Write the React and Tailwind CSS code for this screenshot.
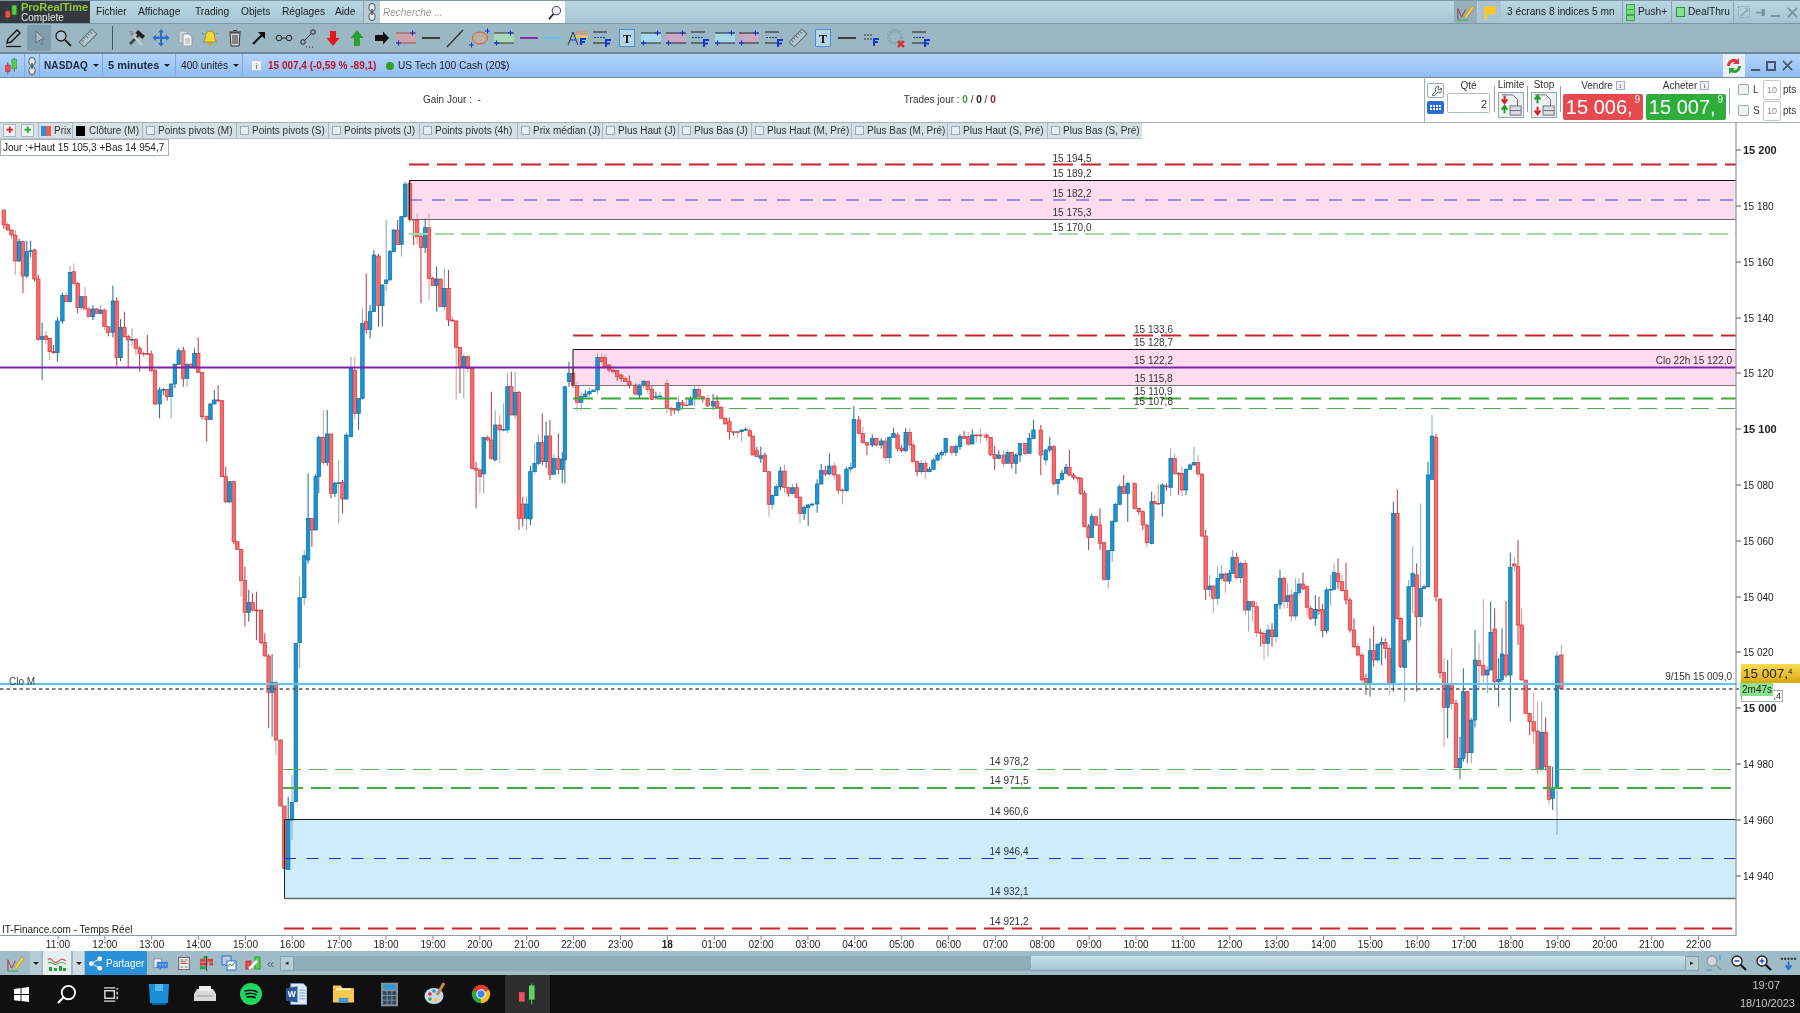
import React from "react";

/* ---------- chart data, traced in crop coordinates ---------- */
const A = [[10,240,284],[20,284,300],[30,300,315],[40,315,393,null,435],[50,393,335],[60,335,438,null,490],[70,438,365,332],[80,365,362,332],[90,360,447],[100,447,628],[110,628,620,578,750],[120,618,628],[130,625,665,null,690],[140,665,668],[150,668,573,null,695],[163,573,497],[173,497,515],[183,515,427,408],[193,425,460,400],[203,460,533],[212,533,500],[222,500,537,470],[232,537,560],[243,560,537,null,570],[253,537,550],[263,550,540,525],[273,540,590],[283,590,607],[295,607,513,467],[305,513,683,null,710],[315,683,592],[325,592,620,545],[335,620,630,null,715],[345,630,628,595],[355,628,655],[365,655,670,null,725],[375,670,670],[385,670,672,615],[395,672,722],[405,722,822],[417,822,780,null,865],[427,780,778],[437,778,800],[447,800,762,null,865],[457,762,703],[467,703,662,655],[479,662,745,650,770],[489,745,703,null,770],[499,703,712],[508,712,670,655],[518,670,727,622],[528,727,860],[540,860,868,null,935],[550,868,822],[560,822,810,780],[570,810,812,765],[580,812,1040],[590,1040,1116,1010],[600,1116,1055,null,1120],[611,1055,1235],[620,1235,1258],[630,1258,1352,null,1400],[640,1352,1447,1310,1490],[650,1447,1417,1380,1475],[660,1417,1440,1390],[670,1440,1440,1385,1530],[682,1440,1537],[692,1537,1578,1510],[702,1578,1687,null,1795],[711,1687,1658,1572,1820],[721,1658,1830,null,1875],[733,1830,2028],[743,2028,2215],[753,2218,2070,2000],[763,2070,2017,1935,2130],[773,2015,1540],[783,1538,1403,1340,1615],[795,1403,1277,1260,1425],[805,1290,1165,1030],[815,1165,1200,null,1250],[825,1200,1040],[833,1040,922,null,1090],[845,922,997,840],[855,997,912,840],[865,912,1090,null,1105],[875,1090,1060],[885,1060,1058,990,1180],[895,1057,1107,null,1150],[905,1107,915],[917,920,715,680],[927,720,850,680],[937,850,805,null,900],[947,805,580,535],[957,575,598,430],[967,598,545,null,625],[977,545,375,360],[989,378,527,372,590],[999,527,465,null,590],[1009,460,450,270],[1019,450,365],[1029,365,300],[1039,300,343,270],[1049,343,260,null,380],[1059,260,162,155],[1071,160,268],[1081,268,270,null,345],[1090,270,320,250],[1100,320,352,null,520],[1111,352,293,265],[1121,293,445,250,510],[1131,445,467],[1141,467,447,410,545],[1151,447,530],[1161,530,475,415,540],[1172,475,570,420],[1182,570,573],[1192,573,652,null,810],[1202,652,712,null,790],[1212,712,680,null,805],[1222,680,715,675],[1234,715,1015],[1244,1015,1020,null,1135],[1254,1020,1040,null,1090],[1264,1032,922,null,1090],[1274,922,930,915],[1284,930,985,785],[1294,990,885,840],[1306,885,900,855,1000],[1316,900,898,820],[1326,900,770,730],[1336,770,855,725],[1346,855,787,725],[1356,787,1165,null,1200],[1366,1122,1165,1100,1190],[1376,1165,1122,1100,1200],[1386,1167,1025],[1397,1025,1000,940],[1407,1000,937,915],[1417,937,995,850],[1427,995,918,875],[1437,918,1033,870,1050],[1447,1033,985],[1459,985,1018,910],[1469,1018,988,null,1060]];
const B = [[12,420,200,null,490],[22,185,160,125],[32,160,197],[42,197,247,null,275],[52,247,230,null,272],[62,230,222],[72,222,215],[82,215,210],[92,210,112,100],[102,112,125,100],[110,112,140,102],[120,135,150],[130,150,155],[140,152,170],[150,165,175],[160,175,185],[170,185,195],[185,195,222],[195,225,195],[205,195,183],[215,185,208],[225,208,238],[235,232,230],[245,230,228,215],[262,190,265,178,278],[272,265,265],[280,265,270,null,282],[290,270,248],[300,248,255],[310,255,255],[320,255,235],[330,235,208],[340,208,230,200],[350,230,235],[362,235,258,225],[375,258,245,222],[385,245,262],[395,262,295],[405,295,312],[415,305,335,292],[425,335,335],[435,335,335,null,352],[445,335,330,null,365],[455,330,328,322],[465,332,348],[472,348,405,null,390],[482,392,410,380],[492,415,407,380],[502,405,455,null,430],[512,455,553,null,590],[520,553,527],[530,527,500],[540,500,453,440],[550,453,503],[560,503,520,null,530],[570,520,503,492],[580,503,532],[588,532,580,null,610],[598,580,563,null,600],[608,563,555,null,618],[618,555,552],[630,552,492],[640,492,452,432],[650,452,462],[660,462,438,400],[672,438,465],[682,465,510],[692,510,512,null,553],[702,512,447],[712,447,442],[720,442,298,258],[732,300,340,288],[742,340,368],[752,368,375,null,405],[765,375,355],[775,355,375],[787,375,363],[797,363,413],[807,413,352,null,430],[817,352,340],[827,345,385],[837,385,392],[847,392,337,325],[857,337,375,325],[865,375,425],[875,425,455],[885,455,430],[895,430,455,null,478],[905,455,448],[915,448,420],[925,420,405],[935,405,397],[945,397,355],[960,380,397],[970,397,380],[980,380,350],[990,350,355],[1000,350,372,335],[1010,372,345,328],[1020,345,345],[1030,345,345,325],[1045,345,352],[1055,352,403],[1065,403,415,null,450],[1075,415,405],[1087,405,430],[1097,430,397],[1107,397,430],[1117,430,405,null,462],[1127,405,370],[1140,370,400],[1150,400,355],[1160,355,330,300],[1178,330,405,315,465],[1190,420,390,null,435],[1200,390,380,350],[1210,380,490],[1220,490,478,null,525],[1230,478,460],[1240,460,442],[1248,442,465,390],[1258,465,472],[1268,472,475],[1276,475,520],[1285,520,620],[1295,620,652,null,690],[1303,652,590],[1313,590,615],[1323,615,670,565,690],[1333,668,778],[1343,778,692,null,805],[1353,692,605,null,725],[1361,605,553],[1371,553,500],[1381,500,520,465],[1391,520,490,null,605],[1408,490,565],[1418,565,575],[1428,575,615,null,630],[1438,615,668,null,683]];
const C = [[5,430,305,275],[13,305,310,null,360],[25,310,310,250],[37,310,255,null,350],[49,258,260,250],[62,262,175,145,288],[74,175,220,160],[86,220,220,null,285],[96,220,270,null,288],[108,270,208],[120,208,195],[132,195,187,140],[144,187,222,165],[156,222,408],[167,408,568,390,600],[179,568,558,525,590],[190,558,595,null,640],[203,595,535,500,615],[214,535,522,495],[226,522,543,null,578],[238,543,520],[248,520,472,450],[260,472,533,458],[272,533,490,null,550],[286,490,630,480],[296,630,605,null,695],[308,605,620,null,665],[320,620,698],[332,698,700,null,740],[342,700,730,null,780],[354,730,690,null,770],[366,690,710,null,740],[378,710,613],[390,613,535,510],[402,535,605],[413,605,587,550],[424,585,648,null,665],[437,648,578,535,660],[447,578,552,535],[459,552,565,518],[471,560,622,null,645],[482,625,655],[496,655,628,585],[507,630,630,590],[518,628,692,null,712],[530,692,570,null,700],[542,570,568,525,615],[552,568,518,490],[564,520,545,475],[576,545,572],[588,572,600,488],[600,600,690],[612,690,740,655],[624,740,765],[636,765,840],[648,835,850,null,885],[660,850,752,715,890],[671,752,780,678,800],[683,780,733],[695,733,727,null,795],[706,727,745,715,775],[718,745,850,null,885],[730,850,340,305,875],[742,340,655,268],[752,655,800],[764,803,720,720,905],[776,720,560,540],[788,560,520,440,640],[800,525,650,490,875],[812,650,565,310,680],[822,565,560],[834,560,225,185],[846,238,108,45],[858,112,590,102,605],[870,597,818],[882,818,922,775,1040],[893,922,850,780,1015],[905,850,910,745],[918,910,1103],[930,1103,1075,1010,1138],[940,1075,875,805,1085],[952,875,1058,null,1090],[964,1058,960,null,1090],[975,960,780,690],[987,782,797,730,870],[1000,797,825,597],[1012,825,810,null,880],[1022,810,697,605],[1034,687,845,625,870],[1046,845,838,775,920],[1056,838,762,685],[1068,765,825,603],[1081,825,502,458,965],[1093,492,498,470],[1104,500,675,420,735],[1115,675,840,625],[1127,840,940,845],[1139,940,965,null,1005],[1151,965,993,878,1030],[1163,993,1108,905,1122],[1175,1108,997,905],[1187,997,1100,952],[1197,1100,1198,null,1215],[1208,1195,1165,1100,1230],[1221,1165,768,755,1305],[1234,765,865,735]];

const hash = (i) => { const s = Math.sin(i * 12.9898) * 43758.5453; return s - Math.floor(s); };
const toCandles = () => {
  const out = [];
  const add = (list, fx, y0) => list.forEach((t) => {
    const i = out.length;
    const a = y0 + t[1] / 3, b = y0 + t[2] / 3;
    const top = Math.min(a, b), bot = Math.max(a, b);
    const hi = t[3] != null ? y0 + t[3] / 3 : top - hash(i) * hash(i + 7) * 9;
    const lo = t[4] != null ? y0 + t[4] / 3 : bot + hash(i + 3) * hash(i + 11) * 9;
    out.push({ x: fx(t[0]), top, bot, hi, lo, up: b < a, faded: hash(i + 19) > 0.55 });
  });
  add(A, (X) => X / 2.613, 130);
  add(B, (X) => 560 + X / 2.45, 320);
  add(C, (X) => 1150 + X / 3, 400);
  return out;
};
const candles = toCandles();

const prices = [["15 200",150,1],["15 180",206],["15 160",262],["15 140",318],["15 120",373],["15 100",429,1],["15 080",485],["15 060",541],["15 040",597],["15 020",652],["15 000",708,1],["14 980",764],["14 960",820],["14 940",876]];
const hours = ["11:00","12:00","13:00","14:00","15:00","16:00","17:00","18:00","19:00","20:00","21:00","22:00","23:00","18","01:00","02:00","03:00","04:00","05:00","06:00","07:00","08:00","09:00","10:00","11:00","12:00","13:00","14:00","15:00","16:00","17:00","18:00","19:00","20:00","21:00","22:00"];
const levelText = [["15 194,5",1072,161.700],["15 189,2",1072,176.700],["15 182,2",1072,196.500],["15 175,3",1072,215.700],["15 170,0",1072,230.500],["15 133,6",1153.500,332.500],["15 128,7",1153.500,345.500],["15 122,2",1153.500,363.700],["15 115,8",1153.500,381.700],["15 110,9",1153.500,394.700],["15 107,8",1153.500,405],["14 978,2",1009,765],["14 971,5",1009,784],["14 960,6",1009,815],["14 946,4",1009,854.500],["14 932,1",1009,894.500],["14 921,2",1009,924.500]];

function Chart() {
  return (
    <svg viewBox="0 122 1800 829" className="block w-[1800px] h-[829px]">
      <rect x="409.5" y="180.5" width="1326.5" height="39" fill="#fddcf0" />
      <rect x="573" y="349.5" width="1163" height="36" fill="#fddcf0" />
      <rect x="284.5" y="819.5" width="1451.5" height="79" fill="#cdecfc" />
      {candles.map((c, i) => (
        <g key={i}>
          <line x1={c.x} x2={c.x} y1={c.hi} y2={c.lo} strokeWidth="1" stroke={c.up ? (c.faded ? "#7fa9bf" : "#1b6a98") : (c.faded ? "#d79a9a" : "#b6393c")} />
          <rect x={c.x - 1.75} y={c.top} width="3.5" height={Math.max(c.bot - c.top, 0.8)} fill={c.up ? "#1b94d2" : "#f86a6c"} stroke={c.up ? "#0f6ea4" : "#cf3a3f"} strokeWidth="0.7" />
        </g>
      ))}
      <path d="M409.5 219.5V180.5H1736" fill="none" stroke="#111" />
      <path d="M409.5 219.5H1736" fill="none" stroke="#666" />
      <path d="M573 385.5V349.5H1736" fill="none" stroke="#111" />
      <path d="M573 385.5H1736" fill="none" stroke="#777" />
      <path d="M284.5 898.5V819.5H1736" fill="none" stroke="#222" />
      <path d="M284.5 898.5H1736" fill="none" stroke="#666" strokeWidth="1.4" />

      <line x1="409" x2="1736" y1="164.5" y2="164.5" stroke="#c9242c" strokeWidth="2" strokeDasharray="20 8" />
      <line x1="409" x2="1736" y1="200" y2="200" stroke="#4440cc" strokeWidth="1.2" strokeDasharray="13 10" />
      <line x1="409" x2="1736" y1="234" y2="234" stroke="#a3d9a3" strokeWidth="2" strokeDasharray="19 7" />
      <line x1="573" x2="1736" y1="335.5" y2="335.5" stroke="#c9242c" strokeWidth="2" strokeDasharray="20 8" />
      <line x1="0" x2="1736" y1="367.5" y2="367.5" stroke="#7b22a8" strokeWidth="2" />
      <line x1="573" x2="1736" y1="398.5" y2="398.5" stroke="#38a838" strokeWidth="2" strokeDasharray="20 8" />
      <line x1="573" x2="1736" y1="408.5" y2="408.5" stroke="#4caf50" strokeWidth="1" strokeDasharray="18 8" />
      <line x1="0" x2="1736" y1="684" y2="684" stroke="#5cc6f4" strokeWidth="2" />
      <line x1="0" x2="1742" y1="689" y2="689" stroke="#555" strokeWidth="1.4" strokeDasharray="3.5 3" />
      <line x1="283" x2="1736" y1="769.5" y2="769.5" stroke="#53b553" strokeWidth="1" strokeDasharray="18 8" />
      <line x1="283" x2="1736" y1="788" y2="788" stroke="#43aa45" strokeWidth="2" strokeDasharray="20 8" />
      <line x1="284" x2="1736" y1="858.5" y2="858.5" stroke="#2a2ad0" strokeWidth="1.2" strokeDasharray="12 10.5" />
      <line x1="284" x2="1736" y1="928.5" y2="928.5" stroke="#c9242c" strokeWidth="2" strokeDasharray="20 8" />

      <g fontSize="10" fill="#333">
        {levelText.map(([t, x, y]) => <text key={t} x={x} y={y} textAnchor="middle">{t}</text>)}
        <text x="1732" y="363.5" textAnchor="end">Clo 22h 15 122,0</text>
        <text x="1732" y="679.5" textAnchor="end">9/15h 15 009,0</text>
        <text x="9" y="685" fill="#444">Clo M</text>
        <text x="2" y="932.5" fill="#222">IT-Finance.com - Temps Réel</text>
      </g>

      <path d="M0 935.5H1736V122" fill="none" stroke="#8d9ca6" strokeWidth="1.2" />
      {prices.map(([t, y, b]) => (
        <g key={t}>
          <line x1="1736" x2="1741" y1={y} y2={y} stroke="#555" />
          <text x="1743" y={y + 3.5} fontSize={b ? 11 : 10} fontWeight={b ? 700 : 400} fill="#222">{t}</text>
        </g>
      ))}
      {hours.map((t, i) => {
        const x = 58 + 46.87 * i;
        return (
          <g key={i}>
            <line x1={x} x2={x} y1="936" y2="940" stroke="#7f8f99" />
            <text x={x} y="948" fontSize="10" textAnchor="middle" fontWeight={t === "18" ? 700 : 400} fill="#222">{t}</text>
          </g>
        );
      })}
    </svg>
  );
}

/* ---------- icons ---------- */
const S = ({ children, c = "w-[20px] h-[20px]", v = "0 0 20 20" }) => <svg viewBox={v} className={c}>{children}</svg>;
const Pencil = () => <S><path d="M3 15l1-4L13 2l3 3-9 9z" fill="none" stroke="#111" strokeWidth="1.4" /><path d="M2 18.5h15" stroke="#111" strokeWidth="1.2" /></S>;
const Pointer = () => <S><path d="M7 3v12l3-3 2.5 5 1.6-.8-2.5-4.7 3.6-.5z" fill="#a9bcc6" stroke="#5b6a72" strokeWidth=".8" /></S>;
const Mag = () => <S><circle cx="8" cy="8" r="5" fill="#a9c5d1" stroke="#222" strokeWidth="1.3" /><path d="M12 12l6 6" stroke="#222" strokeWidth="1.8" /></S>;
const Ruler = () => <S><g transform="rotate(-45 10 10)"><rect x="1" y="6.5" width="18" height="7" fill="#b4c8d1" stroke="#5d6c74" /><path d="M4 7v3M7 7v2M10 7v3M13 7v2M16 7v3" stroke="#5d6c74" /></g></S>;
const Tools = () => <S><path d="M3 16L14 5" stroke="#444" strokeWidth="2.6" /><path d="M11 2l7 6-2.5 3-7-6z" fill="#222" /><path d="M15 17L5 6" stroke="#c8ced2" strokeWidth="2.6" /><path d="M2 3l4 0 1 4-3 1z" fill="#8a9499" /></S>;
const Move = () => <S><path d="M10 1l3 3.5h-2v4h4v-2L18.5 10 15 13v-2h-4v4h2L10 18.5 7 15h2v-4H5v2L1.5 10 5 6.5v2h4v-4H7z" fill="#2a6fc4" /></S>;
const Copy = () => <S><path d="M3 3h8v12H3z" fill="#c9d2d7" stroke="#9aa6ac" /><path d="M7 6h6l3 3v9H7z" fill="#f2f4f5" stroke="#8f9ba1" /><path d="M9 11h5M9 13h5M9 15h5" stroke="#9aa6ac" /></S>;
const Bell = () => <S><path d="M10 3c-3 0-4.5 2.5-4.5 5.5 0 3-1.5 4.5-2 5.5h13c-.5-1-2-2.500-2-5.500C14.500 5.500 13 3 10 3z" fill="#f5d530" stroke="#8f7a10" strokeWidth=".7" /><circle cx="10" cy="16" r="1.800" fill="#d9a800" /><path d="M2 5l1.500 1M18 5l-1.500 1" stroke="#666" /></S>;
const Trash = () => <S><path d="M5 5h10l-1 13H6z" fill="#d3d8d8" stroke="#333" /><path d="M4 4h12M8 2.500h4M8 7v9M10 7v9M12 7v9" stroke="#333" /></S>;
const ArrowNE = () => <S><path d="M4 16L14 6" stroke="#111" strokeWidth="2.2" /><path d="M9 4h7v7z" fill="#111" /></S>;
const LinkLine = () => <S><circle cx="5" cy="10" r="2.800" fill="none" stroke="#222" /><circle cx="15" cy="10" r="2.800" fill="none" stroke="#222" /><path d="M8 10h4" stroke="#222" /></S>;
const DotsLine = () => <S><circle cx="5" cy="14" r="2.300" fill="none" stroke="#222" /><circle cx="15" cy="4" r="2.300" fill="none" stroke="#222" /><path d="M7 12l6-6M8 19h1M11 19h1M14 19h1" stroke="#222" /></S>;
const DownRed = () => <S><path d="M7 3h6v7h3.500L10 18 3.500 10H7z" fill="#e3191c" /></S>;
const UpGreen = () => <S><path d="M7 18h6v-8h3.500L10 2 3.500 10H7z" fill="#2ca02c" /></S>;
const RightBlack = () => <S><path d="M3 7h8V3.500l6 6.500-6 6.500V13H3z" fill="#111" /></S>;
const RectPlus = ({ fill = "#c8a5ab", line = "#b04a4a" }) => <S v="0 0 22 20" c="w-[22px] h-[20px]"><rect x="1" y="5" width="20" height="10" fill={fill} /><path d="M1 5h20M1 15h20" stroke={line} /><path d="M1 15h5M3.500 12.500v5M15 5h5M17.500 2.500v5" stroke="#1238d0" strokeWidth="1.200" /></S>;
const Line = ({ col = "#333" }) => <S v="0 0 22 20" c="w-[22px] h-[20px]"><path d="M2 10h18" stroke={col} strokeWidth="1.800" /></S>;
const Diag = () => <S><path d="M2 19L18 2" stroke="#333" strokeWidth="1.400" /></S>;
const Ellipse = () => <S v="0 0 22 20" c="w-[22px] h-[20px]"><ellipse cx="11" cy="10" rx="7.500" ry="6" fill="#bfae9f" stroke="#c8632f" /><path d="M0 17h5M2.500 14.500v5M16 3h5M18.500 .5v5" stroke="#1238d0" /></S>;
const Fib = () => <S v="0 0 22 20" c="w-[22px] h-[20px]"><path d="M9 3h12v3H9z" fill="#c99" /><path d="M9 7h12v3H9z" fill="#ecc35a" /><path d="M1 17L6 4l5 13" fill="none" stroke="#333" /><path d="M3 12h6" stroke="#1238d0" /><path d="M14 17v-6h5M14 14h4" fill="none" stroke="#1238d0" strokeWidth="2" /></S>;
const LinesF = () => <S v="0 0 20 20" c="w-[20px] h-[20px]"><path d="M1 4h14M1 15h14" stroke="#222" strokeWidth="1.200" /><path d="M2 9.500h12" stroke="#1238d0" strokeDasharray="2 1" /><path d="M14 19v-7h5M14 15.500h4" fill="none" stroke="#1238d0" strokeWidth="2" /></S>;
const TBox = () => <S v="0 0 16 18" c="w-[16px] h-[18px]"><rect x=".5" y=".5" width="15" height="17" fill="#b9d4e6" stroke="#4d8fd8" /><text x="8" y="13.500" fontSize="12" fontWeight="700" textAnchor="middle" fill="#111" fontFamily="Liberation Serif, serif">T</text></S>;
const SmallF = () => <S><path d="M2 7h2M5 7h2M8 7h2M2 11h12" stroke="#333" strokeDasharray="2 1" /><path d="M12 18v-7h5M12 14h4" fill="none" stroke="#1238d0" strokeWidth="2" /></S>;
const CircleX = () => <S><circle cx="9" cy="9" r="6.500" fill="none" stroke="#8ea2ab" strokeWidth="3.500" strokeDasharray="2 1" /><path d="M12 13l6 6M18 13l-6 6" stroke="#e02a2a" strokeWidth="2.400" /></S>;
const LinkV = () => <S v="0 0 10 20" c="w-[10px] h-[20px]"><rect x="2" y="1.500" width="6" height="8" rx="3" fill="#dde6ea" stroke="#555" /><rect x="2" y="10.500" width="6" height="8" rx="3" fill="#dde6ea" stroke="#555" /><path d="M5 7v6" stroke="#555" strokeWidth="1.500" /></S>;
const CandleIcon = () => <S v="0 0 16 20" c="w-[15px] h-[20px]"><path d="M4 6v13M11 1v15" stroke="#555" /><rect x="1.500" y="9" width="5" height="7" fill="#ef4e50" stroke="#b03030" strokeWidth=".6" /><rect x="8.500" y="3" width="5" height="10" fill="#58d043" stroke="#2a9a2a" strokeWidth=".6" /></S>;
const Refresh = () => <S><path d="M3 10a7 7 0 0 1 10-6.300L15 2v6H9l2-2a4 4 0 0 0-5 4z" fill="#e8333a" /><path d="M17 10a7 7 0 0 1-10 6.300L5 18v-6h6l-2 2a4 4 0 0 0 5-4z" fill="#2da52d" /></S>;
const LimitBtn = ({ up }) => (
  <svg viewBox="0 0 26 26" className="w-[24px] h-[24px]">
    <path d="M3 2h12l5 5v8" fill="none" stroke="#667" />
    <path d={up ? "M6 3v7M3 7l3 4 3-4" : "M6 11V4M3 7l3-4 3 4"} stroke={up ? "#d92020" : "#1f9d1f"} strokeWidth="2.200" fill="none" />
    <path d={up ? "M6 22v-7M3 18l3-4 3 4" : "M6 15v7M3 19l3 4 3-4"} stroke={up ? "#1f9d1f" : "#d92020"} strokeWidth="2.200" fill="none" />
    <rect x="12" y="14" width="12" height="10" fill="#d9dfe2" stroke="#667" />
    <path d="M12 19h12" stroke="#667" />
  </svg>
);
const WinX = ({ col = "#46596a" }) => <S v="0 0 12 12" c="w-[11px] h-[11px]"><path d="M1 1l10 10M11 1L1 11" stroke={col} strokeWidth="1.800" /></S>;
const InfoBox = () => <span className="w-[9px] h-[9px] ml-[3px] border border-[#aab] bg-[#eef2f5] text-[7px] leading-[8px] text-center text-[#446] font-['Liberation_Serif',serif]">i</span>;
const Pen2 = () => <svg viewBox="0 0 20 20" className="w-[19px] h-[19px]"><path d="M2 18V6l4 9 4-8" fill="none" stroke="#a33" /><path d="M2 18h11" stroke="#3a3" /><path d="M9 14l8-11 2 2-8 11z" fill="#f4d03f" stroke="#a08010" strokeWidth=".5" /></svg>;

const toolIcons = [Pencil, Pointer, Mag, Ruler, null, Tools, Move, Copy, Bell, Trash, ArrowNE, LinkLine, DotsLine, DownRed, UpGreen, RightBlack, RectPlus,
  Line, Diag, Ellipse, () => <RectPlus fill="#a8d8b8" line="#333" />, () => <Line col="#7b22a8" />, () => <Line col="#5cc6f4" />, Fib, LinesF, TBox,
  () => <RectPlus fill="#a6d6ea" line="#222" />, () => <RectPlus fill="#c8a9c4" line="#222" />, LinesF, () => <RectPlus fill="#a6d6ea" line="#222" />, () => <RectPlus fill="#c8a9c4" line="#222" />, LinesF, Ruler, TBox, Line, SmallF, CircleX, LinesF];

const legend = [
  ["w-[94px]", "Points pivots (M)"], ["w-[92px]", "Points pivots (S)"], ["w-[91px]", "Points pivots (J)"], ["w-[98px]", "Points pivots (4h)"],
  ["w-[85px]", "Prix médian (J)"], ["w-[76px]", "Plus Haut (J)"], ["w-[73px]", "Plus Bas (J)"], ["w-[100px]", "Plus Haut (M, Pré)"],
  ["w-[96px]", "Plus Bas (M, Pré)"], ["w-[100px]", "Plus Haut (S, Pré)"], ["w-[95px]", "Plus Bas (S, Pré)"],
];
const Check = () => <span className="w-[9px] h-[9px] border border-[#98a8b0] bg-[#e8edf0] shrink-0" />;
const Sep = ({ c = "" }) => <span className={`w-px h-[26px] bg-[#8fa3ae] shrink-0 ${c}`} />;

const PriceBtn = ({ bg, main, sup }) => (
  <div className={`${bg} w-[80px] h-[26px] rounded-[2px] mt-[2px] flex items-start justify-center text-white text-[20px] leading-[27px] font-light`}>
    {main}<span className="text-[10px] leading-[12px] ml-[2px]">{sup}</span>
  </div>
);

const Tri = () => <span className="w-0 h-0 border-x-[3px] border-x-transparent border-t-[3px] border-t-[#222]" />;
const Caret = () => <span className="ml-[5px] flex"><Tri /></span>;

export default function App() {
  return (
    <div className="w-[1800px] h-[1013px] overflow-hidden flex flex-col bg-white text-[#222] font-['Liberation_Sans',Arial,sans-serif] text-[11px] blur-[0.3px]">
      {/* menu bar */}
      <div className="h-[24px] shrink-0 flex items-center bg-gradient-to-b from-[#b9d7e2] to-[#a5c5d2] border-y border-[#7c98a6] text-[10.2px]">
        <div className="w-[90px] h-full bg-[#333a3d] flex items-center pl-[4px] mr-[6px]">
          <CandleIcon />
          <div className="ml-[2px] leading-[11px]">
            <div className="text-[#8fc83f] font-bold text-[11px] leading-[12px]">ProRealTime</div>
            <div className="text-[#e8e8e8] text-[10px] leading-[10px]">Complete</div>
          </div>
        </div>
        <span className="w-[42px]">Fichier</span>
        <span className="w-[57px]">Affichage</span>
        <span className="w-[46px]">Trading</span>
        <span className="w-[41px]">Objets</span>
        <span className="w-[53px]">Réglages</span>
        <span className="w-[28px]">Aide</span>
        <span className="w-[17px] h-full flex items-center justify-center bg-[#b8cdd6] border-l border-[#8fa3ae]"><LinkV /></span>
        <div className="w-[185px] h-full bg-white flex items-center justify-between px-[3px] italic text-[#999] text-[10px]">
          <span>Recherche ...</span>
          <svg viewBox="0 0 16 16" className="w-[15px] h-[15px]"><circle cx="10" cy="6" r="4.500" fill="#eef" stroke="#333" /><path d="M7 9.500L2 15" stroke="#222" strokeWidth="1.800" /></svg>
        </div>
        <div className="flex-1" />
        <span className="w-[23px] h-full bg-[#96afba] flex items-center justify-center"><Pen2 /></span>
        <span className="ml-px w-[23px] h-full bg-[#a9c4d0] flex items-center justify-center"><svg viewBox="0 0 20 20" className="w-[17px] h-[17px]"><path d="M4 3h13v9H7v6H4z" fill="#ffc81e" /></svg></span>
        <span className="ml-[6px] w-[115px] whitespace-nowrap">3 écrans 8 indices 5 mn</span>
        <span className="h-full w-px bg-[#8fa3ae]" />
        <span className="ml-[3px] w-[9px] h-[17px] bg-[#3fa84b] flex flex-col justify-between p-px"><i className="h-[4px] bg-[#7fd98a]" /><i className="h-[4px] bg-[#7fd98a]" /><i className="h-[4px] bg-[#7fd98a]" /></span>
        <span className="ml-[3px] w-[33px]">Push+</span>
        <span className="h-full w-px bg-[#8fa3ae]" />
        <span className="ml-[4px] w-[9px] h-[10px] bg-[#8be08f] border border-[#2f8f3a]" />
        <span className="ml-[3px] w-[45px]">DealThru</span>
        <span className="h-full w-px bg-[#8fa3ae]" />
        <div className="w-[66px] flex items-center pl-[4px] gap-[5px] text-[#7f95a2]">
          <svg viewBox="0 0 12 12" className="w-[12px] h-[12px]"><rect x=".5" y=".5" width="11" height="11" fill="none" stroke="#8ea3ae" strokeDasharray="1.500 1" /><path d="M3 10l5-5M7 2l3 2-2 2" stroke="#8ea3ae" strokeWidth="1.300" fill="none" /></svg>
          <svg viewBox="0 0 12 12" className="w-[11px] h-[11px]"><path d="M1 6h7M8 3h2v6H8z" stroke="#7b90a0" strokeWidth="1.500" fill="#7b90a0" /></svg>
          <span className="w-[9px] h-[2px] bg-[#7b90a0] mt-[7px]" />
          <span className="ml-[2px]"><WinX col="#7b90a0" /></span>
        </div>
      </div>
      {/* tool bar */}
      <div className="h-[30px] shrink-0 flex items-center pl-[2px] bg-[#9ab7c3] border-b-2 border-[#6f8b99]">
        {toolIcons.map((Ic, i) => (
          <span key={i} className={`w-[24.5px] shrink-0 flex items-center justify-center ${i === 1 ? "h-[26px] bg-[#7f9dab] rounded-[2px]" : "h-[24px]"}`}>
            {Ic ? <Ic /> : <span className="w-[1.500px] h-[24px] bg-[#45565e]" />}
          </span>
        ))}
      </div>
      {/* instrument bar */}
      <div className="h-[24px] shrink-0 flex items-center bg-gradient-to-b from-[#b2d4fb] to-[#8fbcf2] border-b border-[#74909f] text-[10.2px]">
        <span className="ml-[4px]"><CandleIcon /></span>
        <span className="ml-[5px] w-[16px] h-full flex items-center justify-center border-x border-[#8aa9c6]"><LinkV /></span>
        <span className="w-[63px] h-full flex items-center pl-[4px] border-r border-[#8aa9c6]"><span className="font-bold text-[#1a2a3a] text-[10px] tracking-[.1px]">NASDAQ</span><Caret /></span>
        <span className="w-[73px] h-full flex items-center pl-[5px] border-r border-[#8aa9c6]"><span className="font-bold text-[#1a2a3a] text-[11px]">5 minutes</span><Caret /></span>
        <span className="w-[67px] h-full flex items-center pl-[5px] border-r border-[#8aa9c6]"><span>400 unités</span><Caret /></span>
        <span className="ml-[8px] w-[11px] h-[11px] bg-[#eef2f5] border border-[#b5c4d0] text-[9px] leading-[10px] text-center text-[#667] font-['Liberation_Serif',serif]">i</span>
        <span className="ml-[6px] font-bold text-[#c01525] text-[10px] w-[113px] whitespace-nowrap">15 007,4 (-0,59 % -89,1)</span>
        <span className="ml-[5px] w-[8px] h-[8px] rounded-full bg-[#3a9d23]" />
        <span className="ml-[4px]">US Tech 100 Cash (20$)</span>
        <div className="flex-1" />
        <span className="w-[22px] h-full bg-[#e8f1fb] flex items-center justify-center"><Refresh /></span>
        <span className="ml-[6px] w-[9px] h-[2px] bg-[#45596b] mt-[8px]" />
        <span className="ml-[6px] w-[10px] h-[10px] border-2 border-[#45596b]" />
        <span className="ml-[6px] mr-[7px]"><WinX /></span>
      </div>
      {/* trade panel */}
      <div className="h-[44px] shrink-0 flex bg-white text-[10px] text-[#333]">
        <div className="ml-[423px] mt-[14px]">Gain Jour :&nbsp; -</div>
        <div className="ml-[423px] mt-[14px]">Trades jour : <b className="text-[#2ea32e]">0</b> <span>/</span> <b className="text-[#222]">0</b> <span>/</span> <b className="text-[#c01525]">0</b></div>
        <div className="flex-1" />
        <div className="w-[376px] h-full border-l border-[#9fb0ba] flex">
          <div className="ml-[2px] w-[17px] flex flex-col items-center mt-[5px]">
            <span className="w-[17px] h-[15px] border border-[#98a8b0] rounded-[2px] flex items-center justify-center"><svg viewBox="0 0 12 12" className="w-[12px] h-[12px]"><path d="M2 10l4-4-1-2 2-3 2 1-1 2 2 1 1-2 1 2-2 3-2-1-4 4z" fill="#fff" stroke="#333" strokeWidth=".8" /></svg></span>
            <span className="mt-[3px] w-[17px] h-[13px] bg-[#2a6ed0] rounded-[2px] flex flex-wrap justify-center content-center gap-px p-[2px]">{[0,1,2,3,4,5,6,7].map((i) => <i key={i} className="w-[2px] h-[2px] bg-white" />)}</span>
          </div>
          <div className="ml-[3px] w-[43px] flex flex-col items-center">
            <span className="h-[15px] leading-[15px]">Qté</span>
            <div className="w-[43px] h-[20px] border border-[#b0bcc3] rounded-[2px] text-right pr-[2px] leading-[20px] text-[11px]">2</div>
          </div>
          <Sep c="ml-[4px] mt-[8px]" />
          <div className="ml-[3px] w-[26px] flex flex-col items-center">
            <span className="h-[14px] leading-[14px]">Limite</span>
            <div className="w-[26px] h-[26px] border border-[#98a8b0] bg-[#eef1f3] flex items-center justify-center"><LimitBtn up /></div>
          </div>
          <Sep c="ml-[3px] mt-[8px]" />
          <div className="ml-[3px] w-[26px] flex flex-col items-center">
            <span className="h-[14px] leading-[14px]">Stop</span>
            <div className="w-[26px] h-[26px] border border-[#98a8b0] bg-[#eef1f3] flex items-center justify-center"><LimitBtn /></div>
          </div>
          <Sep c="ml-[3px] mt-[8px]" />
          <div className="ml-[2px] w-[80px] flex flex-col items-center">
            <span className="h-[14px] flex items-center">Vendre<InfoBox /></span>
            <PriceBtn bg="bg-[#e64a4f]" main="15 006," sup="9" />
          </div>
          <div className="ml-[3px] w-[80px] flex flex-col items-center">
            <span className="h-[14px] flex items-center">Acheter<InfoBox /></span>
            <PriceBtn bg="bg-[#2dae3a]" main="15 007," sup="9" />
          </div>
          <Sep c="ml-[3px] mt-[10px]" />
          <div className="ml-[8px] flex flex-col mt-[1px]">
            {["L", "S"].map((l) => (
              <div key={l} className="h-[21px] flex items-center">
                <span className="w-[11px] h-[11px] border border-[#98a8b0] rounded-[2px] bg-[#f2f4f5]" />
                <span className="ml-[4px] w-[10px]">{l}</span>
                <span className="w-[18px] h-[20px] border border-[#c0cad0] rounded-[2px] text-center leading-[19px] text-[9px] text-[#888]">10</span>
                <span className="ml-[2px]">pts</span>
              </div>
            ))}
          </div>
        </div>
      </div>
      {/* chart */}
      <div className="relative h-[829px] shrink-0">
        <Chart />
        <div className="absolute left-0 top-0 w-full border-t border-[#9fb0ba]">
          <div className="flex h-[16px] w-fit items-center bg-[#d5dfe4] border-b border-[#b8c6cd] text-[10px] text-[#333]">
            <span className="ml-[3px] w-[13px] h-[13px] bg-[#eef2f4] border border-[#a9b8c0] flex items-center justify-center text-[#e02020] text-[9px] leading-[9px]">✚</span>
            <span className="ml-[5px] w-[13px] h-[13px] bg-[#eef2f4] border border-[#a9b8c0] flex items-center justify-center text-[#2ea32e] text-[9px] leading-[9px]">✚</span>
            <span className="ml-[4px] w-[34px] h-full flex items-center border-l border-[#a9b8c0] pl-[2px]"><i className="w-[5px] h-[10px] bg-[#2a8ed8]" /><i className="w-[5px] h-[10px] bg-[#f2584f]" /><span className="ml-[3px]">Prix</span></span>
            <span className="w-[70px] h-full flex items-center border-l border-[#a9b8c0] pl-[3px]"><i className="w-[9px] h-[10px] bg-black" /><span className="ml-[4px]">Clôture (M)</span></span>
            {legend.map(([w, t]) => (
              <span key={t} className={`${w} h-full flex items-center border-l border-[#a9b8c0] pl-[3px]`}><Check /><span className="ml-[3px] whitespace-nowrap">{t}</span></span>
            ))}
          </div>
          <div className="w-[169px] h-[17px] bg-white border border-[#9fb0ba] text-[10px] leading-[15px] pl-[2px]">Jour :+Haut 15 105,3 +Bas 14 954,7</div>
        </div>
        {/* last price tags */}
        <div className="absolute left-[1741px] top-[542px] w-[59px] h-[19px] bg-gradient-to-b from-[#f8dc50] to-[#d9a905] text-[13.500px] leading-[19px] pl-[2px] whitespace-nowrap">15 007,<sup className="text-[8px]">4</sup></div>
        <div className="absolute left-[1741px] top-[568px] w-[42px] h-[12px] bg-white border border-[#9fb0ba] text-[9px] leading-[10px] text-right pr-px">,4</div>
        <div className="absolute left-[1740px] top-[561px] w-[33px] h-[13px] bg-[#8ce38f] text-[10px] leading-[13px] pl-[2px]">2m47s</div>
      </div>
      {/* bottom tool bar */}
      <div className="h-[24px] shrink-0 flex items-center bg-[#9fbcc8]">
        <span className="w-[30px] flex items-center justify-center"><Pen2 /></span>
        <span className="w-[11px] h-full bg-[#b6cdd7] flex items-center justify-center"><Tri /></span>
        <span className="ml-[2px] w-[28px] h-full bg-[#e6eef1] flex items-center justify-center"><svg viewBox="0 0 20 20" className="w-[20px] h-[20px]"><path d="M1 7c3-5 5 5 9 2s5-4 9-1" fill="none" stroke="#d55" strokeWidth="1.200" /><path d="M1 10c3-3 5 3 9 1s5-2 9 0" fill="none" stroke="#5a5" strokeWidth="1.200" /><path d="M2 18v-4h3v4zM7 18v-3h3v3zM12 18v-5h3v5zM16 18v-3h3v3z" fill="#2e9e3a" /></svg></span>
        <span className="ml-[2px] w-[11px] h-full bg-[#cfdde3] flex items-center justify-center"><Tri /></span>
        <span className="ml-px w-[62px] h-full bg-[#2a90d8] flex items-center text-white text-[10px]">
          <svg viewBox="0 0 16 16" className="ml-[3px] w-[15px] h-[15px]"><circle cx="3.500" cy="8" r="2.500" fill="#fff" /><circle cx="12.500" cy="3" r="2.500" fill="#fff" /><circle cx="12.500" cy="13" r="2.500" fill="#fff" /><path d="M3.500 8L12.500 3M3.500 8l9 5" stroke="#fff" /></svg>
          <span className="ml-[3px]">Partager</span>
        </span>
        <span className="ml-px w-[24px] flex justify-center"><svg viewBox="0 0 16 16" className="w-[15px] h-[15px]"><rect x="1" y="3" width="8" height="9" fill="#eef" stroke="#889" /><path d="M4 6h12v7H9l-2 3v-3H4z" fill="#3f86d8" /><path d="M7 9.500h1M10 9.500h1M13 9.500h1" stroke="#fff" /></svg></span>
        <span className="w-[23px] flex justify-center"><svg viewBox="0 0 16 16" className="w-[14px] h-[15px]"><rect x="2" y="1" width="12" height="14" fill="#eee" stroke="#555" /><path d="M4 4h3M9 4h3M4 8h8M4 12h3" stroke="#d33" /><path d="M9 12h3M4 6h6" stroke="#383" /></svg></span>
        <span className="w-[22px] flex justify-center"><svg viewBox="0 0 16 16" className="w-[15px] h-[15px]"><path d="M1 3h6v3H1zM9 3h6v3H9zM1 7h8v3H1zM11 7h4v3h-4z" fill="#e23d3d" /><path d="M1 11h6v3H1zM5 0h4v3H5z" fill="#31a53b" /><path d="M8 0v16" stroke="#333" /></svg></span>
        <span className="w-[24px] flex justify-center"><svg viewBox="0 0 16 16" className="w-[16px] h-[16px]"><rect x="1" y="1" width="9" height="9" fill="#bcd" stroke="#2a6ed0" /><rect x="6" y="6" width="9" height="9" fill="#fff" stroke="#2a6ed0" /><path d="M7 12l2-3 2 2 3-4" fill="none" stroke="#2a9a3a" /></svg></span>
        <span className="w-[24px] flex justify-center"><svg viewBox="0 0 16 16" className="w-[16px] h-[16px]"><rect x="10" y="2" width="5" height="12" fill="#58d043" stroke="#2a9a2a" /><rect x="1" y="6" width="5" height="8" fill="#ef4e50" stroke="#b03030" /><path d="M4 14l8-8" stroke="#fff" strokeWidth="2.500" /></svg></span>
        <span className="ml-[2px] text-[#5c7280] text-[13px] leading-none w-[13px]">«</span>
        <span className="w-[14px] h-[15px] bg-[#b5ccd6] border border-[#87a1ad] flex items-center justify-center text-[7px]">◂</span>
        <div className="flex-1 h-[15px] bg-[#8fadb9] flex justify-end">
          <div className="w-[654px] h-full bg-gradient-to-b from-[#c8e0e9] to-[#a4c5d2] border-b border-[#7e9aa6]" />
        </div>
        <span className="w-[14px] h-[15px] bg-[#b5ccd6] border border-[#87a1ad] flex items-center justify-center text-[7px]">▸</span>
        <span className="ml-[6px] w-[18px] flex justify-center"><svg viewBox="0 0 18 18" className="w-[18px] h-[18px]"><circle cx="7" cy="7" r="5" fill="#cdd9de" stroke="#8fa1aa" strokeWidth="1.400" /><path d="M11 11l5 5" stroke="#8fa1aa" strokeWidth="2" /><path d="M15 1v5M1 16h6" stroke="#5f86d8" /></svg></span>
        <span className="ml-[7px] w-[18px] flex justify-center"><svg viewBox="0 0 18 18" className="w-[18px] h-[18px]"><circle cx="7" cy="7" r="5" fill="#fff" stroke="#222" strokeWidth="1.400" /><path d="M11 11l5 5" stroke="#111" strokeWidth="2.200" /><path d="M4.500 7h5" stroke="#2a4fd0" strokeWidth="1.600" /></svg></span>
        <span className="ml-[7px] w-[18px] flex justify-center"><svg viewBox="0 0 18 18" className="w-[18px] h-[18px]"><circle cx="7" cy="7" r="5" fill="#fff" stroke="#222" strokeWidth="1.400" /><path d="M11 11l5 5" stroke="#111" strokeWidth="2.200" /><path d="M4.500 7h5M7 4.500v5" stroke="#2a4fd0" strokeWidth="1.600" /></svg></span>
        <span className="ml-[7px] mr-[3px] w-[17px] flex justify-center"><svg viewBox="0 0 18 18" className="w-[17px] h-[17px]"><path d="M1 4h16" stroke="#222" strokeWidth="2" strokeDasharray="2 1.500" /><path d="M9 7v6M6 11l3 4 3-4" stroke="#2a6ed0" strokeWidth="2" fill="none" /></svg></span>
      </div>
      {/* task bar */}
      <div className="h-[38px] shrink-0 flex items-center bg-[#101010] text-[#c8c8c8]">
        <svg viewBox="0 0 16 16" className="ml-[14px] w-[15px] h-[15px]"><path d="M0 2l7-1v6.500H0zM8 1l8-1v7.500H8zM0 8.500h7V15l-7-1zM8 8.500h8V16l-8-1z" fill="#fff" /></svg>
        <svg viewBox="0 0 22 22" className="ml-[27px] w-[21px] h-[21px]"><circle cx="13" cy="9" r="7" fill="none" stroke="#fff" strokeWidth="2" /><path d="M8 14l-6 6" stroke="#fff" strokeWidth="2.200" /></svg>
        <svg viewBox="0 0 18 18" className="ml-[26px] w-[17px] h-[17px]"><rect x="2" y="5" width="10" height="8" fill="none" stroke="#ddd" strokeWidth="1.500" /><path d="M1 2h12M1 16h12M15 2v2M15 6v3M15 11v3" stroke="#ddd" strokeWidth="1.500" /></svg>
        <svg viewBox="0 0 22 24" className="ml-[28px] w-[22px] h-[24px]"><path d="M1 2h20l-1 19H2z" fill="#1b8fd6" /><path d="M7 2h8v7H7z" fill="#55b8ec" /><path d="M4 21h14v2H4z" fill="#0b5f9a" /></svg>
        <svg viewBox="0 0 22 18" className="ml-[24px] w-[22px] h-[18px]"><path d="M3 4h16l3 5v7H0V9z" fill="#d9d9d9" /><path d="M5 1h12v5H5z" fill="#f0f0f0" /><path d="M3 11h16" stroke="#999" /></svg>
        <svg viewBox="0 0 22 22" className="ml-[24px] w-[22px] h-[22px]"><circle cx="11" cy="11" r="11" fill="#1ed760" /><path d="M5 8c4-1 9-1 12 1M6 11c3-.8 8-.8 10 .8M7 14c3-.6 6-.6 8 .6" fill="none" stroke="#111" strokeWidth="1.700" strokeLinecap="round" /></svg>
        <svg viewBox="0 0 22 24" className="ml-[24px] w-[21px] h-[24px]"><path d="M5 1h13l4 4v18H5z" fill="#dfe8f5" stroke="#6f8fc8" /><path d="M0 6l12-2v17L0 19z" fill="#2b579a" /><text x="6" y="15" fontSize="9" fontWeight="700" fill="#fff" textAnchor="middle">W</text><path d="M14 8h6M14 11h6M14 14h6M14 17h6" stroke="#7a97cc" /></svg>
        <svg viewBox="0 0 22 20" className="ml-[26px] w-[21px] h-[20px]"><path d="M0 1h8l2 3h12v15H0z" fill="#f7c84b" /><path d="M0 5h22" stroke="#e2a52c" /><path d="M6 14h10v5H6z" fill="#3f9ae0" /><path d="M3 4h16v2H3z" fill="#fff2c4" /></svg>
        <svg viewBox="0 0 18 25" className="ml-[27px] w-[17px] h-[25px]"><rect width="18" height="25" fill="#8a9096" /><rect x="2" y="2" width="14" height="5" fill="#2a9ad8" /><g fill="#2e4c66"><rect x="2" y="9" width="4" height="4" /><rect x="7" y="9" width="4" height="4" /><rect x="12" y="9" width="4" height="4" /><rect x="2" y="14" width="4" height="4" /><rect x="7" y="14" width="4" height="4" /><rect x="12" y="14" width="4" height="4" /><rect x="2" y="19" width="4" height="4" /><rect x="7" y="19" width="4" height="4" /><rect x="12" y="19" width="4" height="4" /></g></svg>
        <svg viewBox="0 0 22 24" className="ml-[26px] w-[22px] h-[24px]"><ellipse cx="10" cy="14" rx="9.500" ry="8" fill="#c9d8e4" /><circle cx="6" cy="12" r="1.800" fill="#e24" /><circle cx="10" cy="9" r="1.800" fill="#2a8ed8" /><circle cx="6" cy="17" r="1.800" fill="#3a3" /><circle cx="12" cy="18" r="1.800" fill="#fb3" /><path d="M13 13L20 1" stroke="#c08a4a" strokeWidth="3" /></svg>
        <svg viewBox="0 0 24 24" className="ml-[24px] w-[22px] h-[22px]"><path d="M12 12L3.340 7A10 10 0 0 1 20.660 7Z" fill="#e33b2e" /><path d="M12 12L20.660 7A10 10 0 0 1 12 22Z" fill="#f7c01c" /><path d="M12 12L12 22A10 10 0 0 1 3.340 7Z" fill="#2ea44f" /><circle cx="12" cy="12" r="5.200" fill="#fff" /><circle cx="12" cy="12" r="4" fill="#3f86ec" /></svg>
        <span className="ml-[13px] w-[45px] h-full bg-[#2e2e2e] flex items-center justify-center"><svg viewBox="0 0 20 24" className="w-[19px] h-[24px]"><path d="M14.500 1v22" stroke="#5fd35f" /><rect x="1" y="10" width="6" height="10" fill="#e8525a" /><rect x="11.500" y="3" width="6" height="15" fill="#5fd35f" /></svg></span>
        <div className="flex-1" />
        <div className="w-[60px] mr-[5px] flex flex-col items-end text-[11px] leading-[18px]">
          <span className="mr-[15px]">19:07</span>
          <span>18/10/2023</span>
        </div>
      </div>
    </div>
  );
}
